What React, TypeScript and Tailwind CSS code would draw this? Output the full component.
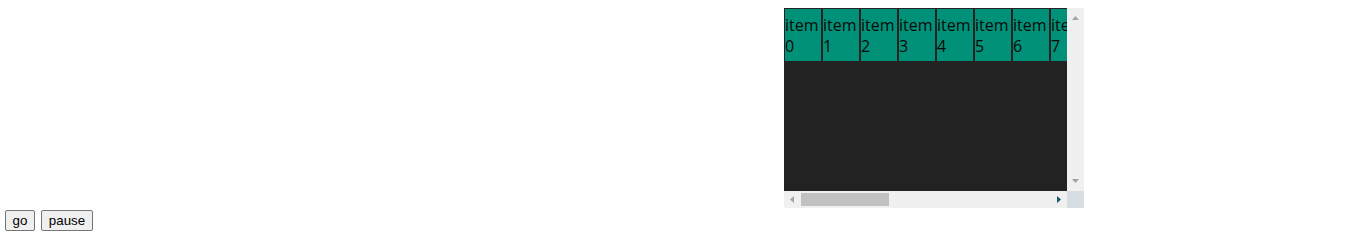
const items = Array.from({ length: 8 }, (_, i) => `item ${i}`);

const Arrow = ({ dir, color }: { dir: 'up' | 'down' | 'left' | 'right'; color: string }) => {
  const points = {
    up: '0,4 3.5,0 7,4',
    down: '0,0 7,0 3.5,4',
    left: '4,0 4,7 0,3.5',
    right: '0,0 0,7 4,3.5',
  }[dir];
  const vertical = dir === 'up' || dir === 'down';
  return (
    <svg width={vertical ? 7 : 4} height={vertical ? 4 : 7} viewBox={vertical ? '0 0 7 4' : '0 0 4 7'}>
      <polygon points={points} fill={color} />
    </svg>
  );
};

export default function App() {
  return (
    <div className="w-[1360px] h-[235px] bg-white text-black">
      {/* scroller */}
      <div className="ml-[784px] pt-[8px] w-[300px]">
        <div className="grid grid-cols-[283px_17px] grid-rows-[183px_17px]">
          <div className="bg-[#222222] overflow-hidden flex items-start">
            {items.map((label) => (
              <div
                key={label}
                className="shrink-0 w-[38px] h-[54px] border border-[#222222] bg-[#009178] pt-[6px] text-[16px] leading-[21px] font-['Open_Sans','Noto_Sans',sans-serif] text-[#0a0a0a] break-words"
              >
                {label}
              </div>
            ))}
          </div>
          <div className="bg-[#f0f0f0] flex flex-col items-center justify-between pt-[8px] pb-[8px]">
            <Arrow dir="up" color="#a3a3a3" />
            <Arrow dir="down" color="#a3a3a3" />
          </div>
          <div className="bg-[#f0f0f0] flex items-center pl-[6px] pr-[6px]">
            <Arrow dir="left" color="#a3a3a3" />
            <div className="ml-[7px] w-[88px] h-[13px] bg-[#c1c1c1]" />
            <div className="ml-auto">
              <Arrow dir="right" color="#1c5766" />
            </div>
          </div>
          <div className="bg-[#d6dee1]" />
        </div>
      </div>

      {/* controls */}
      <div className="flex gap-[6px] pl-[5px] pt-[2px] font-['Liberation_Sans',Arial,sans-serif] text-[13.33px]">
        <button className="w-[30px] h-[21px] bg-[#efefef] border border-[#767676] rounded-[2px] leading-none">go</button>
        <button className="w-[52px] h-[21px] bg-[#efefef] border border-[#767676] rounded-[2px] leading-none">pause</button>
      </div>
    </div>
  );
}
